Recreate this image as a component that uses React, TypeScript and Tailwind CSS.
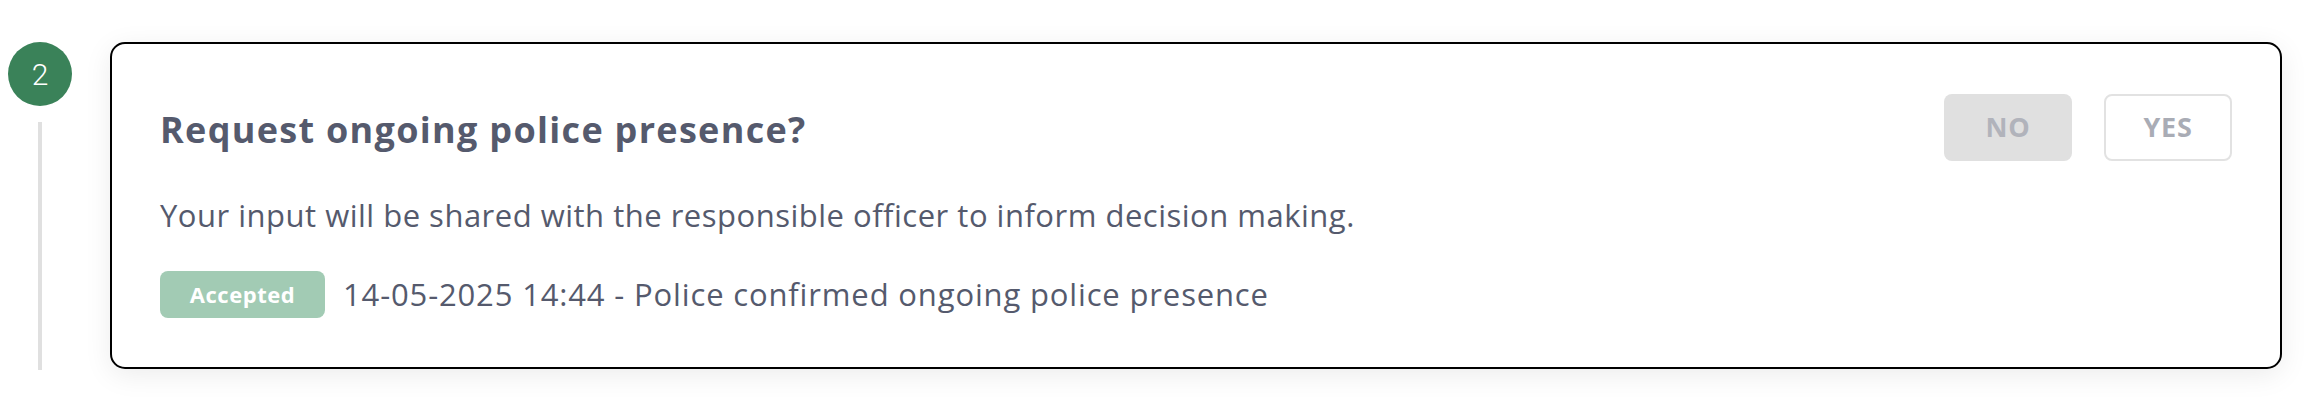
export default function App() {
  return (
    <div className="min-h-[400px] bg-white pt-[42px] pl-2 pr-[30px] font-['Open_Sans',sans-serif]">
      <div className="flex gap-[38px]">
        {/* step marker */}
        <div className="flex w-16 shrink-0 flex-col items-center">
          <div className="flex h-16 w-16 items-center justify-center rounded-full bg-[#3a8259] font-['Roboto',sans-serif] text-[30px] font-light text-white">
            2
          </div>
          <div className="mt-4 h-[248px] w-1 bg-[#e0e0e0]" />
        </div>

        {/* card */}
        <div className="h-[327px] flex-1 rounded-[15px] border-2 border-black bg-white p-12 shadow-[0_6px_28px_rgba(0,0,0,0.08)]">
          <div className="flex items-center justify-between">
            <h2 className="pt-1 text-[36px] font-bold leading-[67px] tracking-[1.3px] text-[#555a6d]">
              Request ongoing police presence?
            </h2>
            <div className="flex gap-8">
              <button className="h-[67px] w-32 rounded-lg bg-[#e0e0e0] text-[27px] font-bold tracking-wide text-[#b1b3bb]">
                NO
              </button>
              <button className="h-[67px] w-32 rounded-lg border-2 border-[#e2e2e2] bg-white text-[27px] font-bold tracking-wide text-[#a9acb5]">
                YES
              </button>
            </div>
          </div>

          <p className="mt-[30px] text-[31px] leading-[45px] tracking-[0.5px] text-[#555a6d]">
            Your input will be shared with the responsible officer to inform decision making.
          </p>

          <div className="mt-[33px] flex items-center gap-[18px]">
            <span className="flex h-[47px] w-[165px] items-center justify-center rounded-lg bg-[#a2cbb4] text-[22px] font-bold tracking-wide text-white">
              Accepted
            </span>
            <span className="text-[31px] tracking-[0.85px] text-[#555a6d]">
              14-05-2025 14:44 - Police confirmed ongoing police presence
            </span>
          </div>
        </div>
      </div>
    </div>
  );
}
